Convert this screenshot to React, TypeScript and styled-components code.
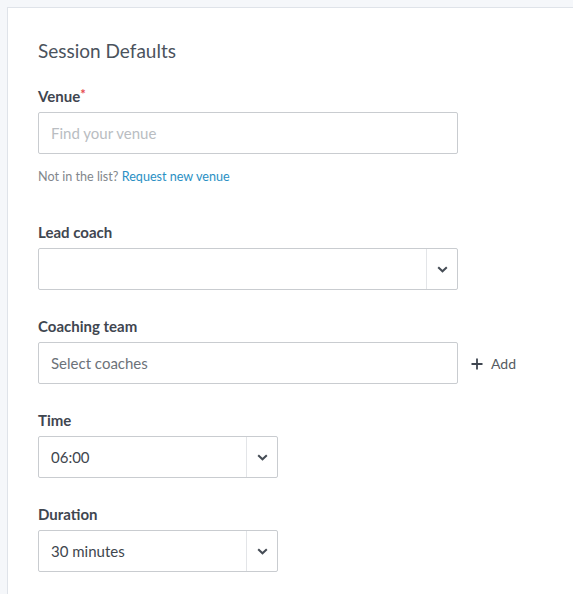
import React from "react";
import styled, { createGlobalStyle } from "styled-components";

const Global = createGlobalStyle`
  html, body { margin: 0; padding: 0; overflow: hidden; }
  body {
    background: #f5f7fa;
    font-family: Lato, "Open Sans", sans-serif;
    color: #3f4650;
  }
`;

const Page = styled.div`
  padding: 7px 0 0 7px;
  height: 594px;
  box-sizing: border-box;
  overflow: hidden;
`;

const Card = styled.section`
  width: 620px;
  height: 640px;
  box-sizing: border-box;
  background: #fff;
  border: 1px solid #dfe3e9;
  padding: 30px 30px;
  display: flex;
  flex-direction: column;
`;

const Title = styled.h2`
  margin: 1px 0 23px;
  font-size: 19px;
  line-height: 24px;
  font-weight: 400;
  color: #4b535d;
`;

const Field = styled.div`
  display: flex;
  flex-direction: column;
  margin-bottom: 26px;
`;

const Label = styled.label`
  font-size: 15px;
  line-height: 20px;
  font-weight: 700;
  color: #3f4650;
  margin-bottom: 6px;
`;

const Req = styled.span`
  color: #e5484d;
  font-size: 13px;
  vertical-align: top;
  line-height: 16px;
`;

const Row = styled.div`
  display: flex;
  align-items: center;
`;

const Box = styled.div<{ $w: number }>`
  width: ${(p) => p.$w}px;
  height: 42px;
  box-sizing: border-box;
  border: 1px solid #c9ccd0;
  border-radius: 2px;
  display: flex;
  align-items: center;
  background: #fff;
`;

const BoxText = styled.span<{ $tone: "placeholder" | "muted" | "value" }>`
  flex: 1;
  padding-left: 12px;
  font-size: 15px;
  color: ${(p) =>
    p.$tone === "placeholder" ? "#b9bdc2" : p.$tone === "muted" ? "#6c7279" : "#40464e"};
`;

const Caret = styled.span`
  width: 30px;
  height: 100%;
  border-left: 1px solid #e3e5e8;
  display: flex;
  align-items: center;
  justify-content: center;
`;

const Help = styled.p`
  margin: 15px 0 11px;
  font-size: 12.6px;
  line-height: 16px;
  color: #82878c;
`;

const Link = styled.a`
  color: #2a90c4;
  text-decoration: none;
`;

const AddButton = styled.button`
  margin-left: 13px;
  background: none;
  border: none;
  padding: 0;
  display: flex;
  align-items: center;
  gap: 8px;
  font-family: inherit;
  font-size: 14px;
  color: #555b62;
  cursor: pointer;
  margin-top: 1px;
`;

const Chevron = () => (
  <svg width="11" height="7" viewBox="0 0 11 7" fill="none">
    <path d="M1.2 1.2 L5.5 5.3 L9.8 1.2" stroke="#454c55" strokeWidth="2" />
  </svg>
);

const Plus = () => (
  <svg width="12" height="12" viewBox="0 0 12 12">
    <path d="M6 0.5 V11.5 M0.5 6 H11.5" stroke="#3f4650" strokeWidth="1.8" />
  </svg>
);

const Select = ({ w, value }: { w: number; value?: string }) => (
  <Box $w={w}>
    <BoxText $tone="value">{value}</BoxText>
    <Caret>
      <Chevron />
    </Caret>
  </Box>
);

export default function App() {
  return (
    <>
      <Global />
      <Page>
        <Card>
          <Title>Session Defaults</Title>
          <Field>
            <Label>
              Venue<Req>*</Req>
            </Label>
            <Box $w={420}>
              <BoxText $tone="placeholder">Find your venue</BoxText>
            </Box>
            <Help>
              Not in the list? <Link href="#">Request new venue</Link>
            </Help>
          </Field>
          <Field>
            <Label>Lead coach</Label>
            <Select w={420} />
          </Field>
          <Field>
            <Label>Coaching team</Label>
            <Row>
              <Box $w={420}>
                <BoxText $tone="muted">Select coaches</BoxText>
              </Box>
              <AddButton>
                <Plus />
                Add
              </AddButton>
            </Row>
          </Field>
          <Field>
            <Label>Time</Label>
            <Select w={240} value="06:00" />
          </Field>
          <Field>
            <Label>Duration</Label>
            <Select w={240} value="30 minutes" />
          </Field>
        </Card>
      </Page>
    </>
  );
}
